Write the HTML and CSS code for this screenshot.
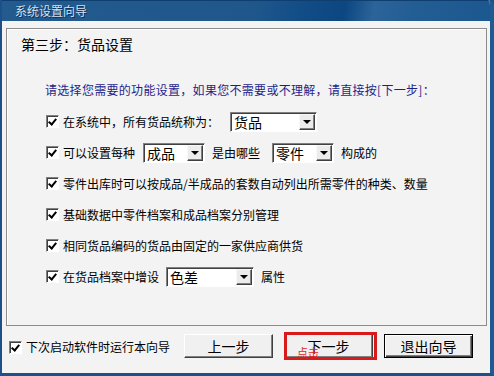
FILE: index.html
```html
<!DOCTYPE html>
<html lang="zh-CN">
  <head>
    <meta charset="utf-8" />
    <title>系统设置向导</title>
    <link rel="stylesheet" href="styles.css">
  </head>
  <body>
    <div class="window">
      <!-- Title bar -->
      <div class="titlebar">
        <span class="title">系统设置向导</span>
      </div>

      <div class="client">
        <!-- Step panel -->
        <div class="group">
          <div class="step-title">第三步：货品设置</div>
          <div class="hint">请选择您需要的功能设置，如果您不需要或不理解，请直接按[下一步]：</div>

          <div class="options">
            <div class="opt">
              <span class="check"></span>
              <span>在系统中，所有货品统称为：</span>
              <span class="combo combo-name"><span class="combo-text">货品</span><span class="combo-btn"></span></span>
            </div>
            <div class="opt">
              <span class="check"></span>
              <span>可以设置每种</span>
              <span class="combo combo-small"><span class="combo-text">成品</span><span class="combo-btn"></span></span>
              <span class="word-mid">是由哪些</span>
              <span class="combo combo-small"><span class="combo-text">零件</span><span class="combo-btn"></span></span>
              <span class="word-end">构成的</span>
            </div>
            <div class="opt">
              <span class="check"></span>
              <span>零件出库时可以按成品/半成品的套数自动列出所需零件的种类、数量</span>
            </div>
            <div class="opt">
              <span class="check"></span>
              <span>基础数据中零件档案和成品档案分别管理</span>
            </div>
            <div class="opt">
              <span class="check"></span>
              <span>相同货品编码的货品由固定的一家供应商供货</span>
            </div>
            <div class="opt">
              <span class="check"></span>
              <span>在货品档案中增设</span>
              <span class="combo combo-attr"><span class="combo-text">色差</span><span class="combo-btn"></span></span>
              <span class="word-end">属性</span>
            </div>
          </div>
        </div>

        <!-- Footer -->
        <div class="footer">
          <div class="opt startup">
            <span class="check"></span>
            <span>下次启动软件时运行本向导</span>
          </div>
          <div class="buttons">
            <button class="btn">上一步</button>
            <button class="btn btn-next">下一步<span class="mark-frame"></span><span class="mark-text">点击</span></button>
            <button class="btn btn-default">退出向导</button>
          </div>
        </div>
      </div>
    </div>
  </body>
</html>
```

FILE: styles.css
```css
/* Classic wizard dialog */
* {
  margin: 0;
  padding: 0;
  box-sizing: border-box;
}

body {
  width: 494px;
  height: 376px;
  overflow: hidden;
  font-family: "Noto Sans CJK SC", "Liberation Sans", sans-serif;
  font-size: 12px;
  color: #000;
  background: #1c5088;
}

.window {
  width: 494px;
  height: 376px;
  display: flex;
  flex-direction: column;
  border-left: 2px solid #1d5088;
  border-right: 4px solid #1f5a92;
  border-bottom: 3px solid #1d5088;
  border-top-right-radius: 6px;
  background: #f3f3f3;
  overflow: hidden;
}

/* Title bar */
.titlebar {
  height: 21px;
  flex: none;
  display: flex;
  align-items: center;
  padding-left: 13px;
  border-top: 1px solid #0f3f70;
  background: linear-gradient(100deg, #235b8f 0%, #1f578b 52%, #114c86 62%, #0c4782 70%, #2c6499 76%, #225d93 84%, #1c5890 100%);
}

.title {
  font-size: 12px;
  line-height: 14px;
  color: #d3e2f3;
  text-shadow: 1px 1px 0 #0b2f58;
}

/* Client area */
.client {
  flex: 1;
  display: flex;
  flex-direction: column;
  padding: 7px 3px 0 4px;
}

.group {
  height: 298px;
  flex: none;
  border: 1px solid #8c8c8c;
  box-shadow: inset 1px 1px 0 #fff;
  padding: 7px 0 0 14px;
}

.step-title {
  font-size: 14px;
  line-height: 16px;
}

.hint {
  margin-top: 30px;
  margin-left: 24px;
  line-height: 16px;
  letter-spacing: 0.3px;
  color: #1f1f8a;
}

.options {
  margin-top: 8px;
  margin-left: 25px;
}

.opt {
  height: 31px;
  display: flex;
  align-items: center;
  white-space: nowrap;
  line-height: 16px;
}

/* Checkbox */
.check {
  position: relative;
  width: 13px;
  height: 13px;
  flex: none;
  margin-right: 4px;
  background: #fff;
  border: 1px solid;
  border-color: #808080 #fff #fff #808080;
  box-shadow: inset 1px 1px 0 #404040;
}

.check::after {
  content: "";
  position: absolute;
  left: 3px;
  top: 1px;
  width: 3px;
  height: 6px;
  border: solid #000;
  border-width: 0 2px 2px 0;
  transform: rotate(40deg);
}

/* Combo box */
.combo {
  height: 20px;
  flex: none;
  display: flex;
  align-items: stretch;
  background: #fff;
  border: 1px solid;
  border-color: #808080 #fff #fff #808080;
  box-shadow: inset 1px 1px 0 #404040;
}

.combo-name {
  width: 87px;
  margin-left: 11px;
}

.combo-small {
  width: 62px;
  margin-left: 8px;
}

.combo-attr {
  width: 88px;
  margin-left: 7px;
}

.combo-text {
  flex: 1;
  padding: 1px 0 0 3px;
  font-size: 14px;
  line-height: 16px;
}

.combo-btn {
  width: 16px;
  margin: 1px 1px 1px 0;
  display: flex;
  align-items: center;
  justify-content: center;
  background: #ececec;
  border: 1px solid;
  border-color: #f8f8f8 #404040 #404040 #f8f8f8;
  box-shadow: inset -1px -1px 0 #808080;
}

.combo-btn::after {
  content: "";
  border-top: 4px solid #000;
  border-left: 4px solid transparent;
  border-right: 4px solid transparent;
}

.word-mid {
  margin-left: 7px;
  margin-right: 4px;
}

.word-end {
  margin-left: 7px;
}

/* Footer */
.footer {
  flex: 1;
  display: flex;
  align-items: flex-start;
  padding: 8px 14px 0 3px;
}

.startup {
  height: 16px;
  margin-top: 5px;
  font-size: 12px;
}

.buttons {
  margin-left: auto;
  display: flex;
  gap: 11px;
}

.btn {
  position: relative;
  width: 89px;
  height: 24px;
  font-family: "Noto Sans CJK SC", sans-serif;
  font-size: 14px;
  line-height: 16px;
  color: #000;
  background: #f0f0f0;
  border: 1px solid;
  border-color: #fff #404040 #404040 #fff;
  box-shadow: inset -1px -1px 0 #808080;
}

.btn-default {
  border-color: #000;
  box-shadow: inset 1px 1px 0 #fff, inset -1px -1px 0 #404040, inset -2px -2px 0 #808080;
}

/* Red annotation around the next button */
.mark-frame {
  position: absolute;
  left: -1px;
  top: -3px;
  right: -5px;
  bottom: -3px;
  border: 3px solid #d81a1a;
}

.mark-text {
  position: absolute;
  left: 12px;
  top: 11px;
  font-size: 11px;
  line-height: 12px;
  color: #e02424;
}
```
